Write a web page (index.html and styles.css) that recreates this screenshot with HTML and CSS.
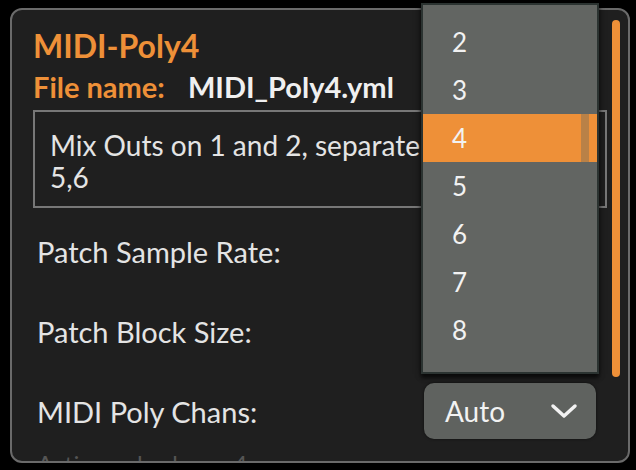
FILE: index.html
```html
<!DOCTYPE html>
<html lang="en">
<head>
    <meta charset="UTF-8">
    <title>MIDI-Poly4</title>
    <link rel="stylesheet" href="styles.css">
</head>
<body>
    <div class="panel">
        <div class="contenido">
            <h1 class="titulo">MIDI-Poly4</h1>
            <div class="archivo">
                <span class="etiqueta">File name:</span>
                <span class="nombre">MIDI_Poly4.yml</span>
            </div>
            <div class="descripcion">
                Mix Outs on 1 and 2, separate voices on 3,4,<br>5,6
            </div>
            <div class="fila">
                <span>Patch Sample Rate:</span>
            </div>
            <div class="fila">
                <span>Patch Block Size:</span>
            </div>
            <div class="fila">
                <span>MIDI Poly Chans:</span>
                <div class="selector">
                    <span>Auto</span>
                    <svg class="flecha" width="28" height="16" viewBox="0 0 28 16">
                        <path d="M3 3 L14 13 L25 3" fill="none" stroke="#f2f2f2" stroke-width="3.5" stroke-linecap="round" stroke-linejoin="round"/>
                    </svg>
                </div>
            </div>
            <div class="nota">Active poly chans: 4</div>
        </div>
        <div class="barra"></div>
    </div>

    <ul class="lista">
        <li>2</li>
        <li>3</li>
        <li class="activo">4</li>
        <li>5</li>
        <li>6</li>
        <li>7</li>
        <li>8</li>
    </ul>
</body>
</html>
```

FILE: styles.css
```css
body {
    margin: 0;
    width: 636px;
    height: 470px;
    background: #000;
    font-family: 'Lato', 'Open Sans', sans-serif;
    color: #e4e4e4;
    overflow: hidden;
    position: relative;
}

.panel {
    margin: 8px 6px 0 10px;
    height: 455px;
    box-sizing: border-box;
    border: 2px solid #6a6a6a;
    border-radius: 12px;
    background: #1f1f1f;
    display: flex;
    overflow: hidden;
}

.contenido {
    flex: 1;
    min-width: 0;
    padding: 0 5px 0 21px;
}

.titulo {
    margin: 0;
    padding-top: 20px;
    height: 32px;
    line-height: 32px;
    font-size: 32px;
    font-weight: 700;
    color: #ee9038;
}

.archivo {
    margin-top: 10px;
    height: 30px;
    line-height: 30px;
    font-size: 29px;
    font-weight: 700;
    white-space: nowrap;
}

.etiqueta {
    color: #ee9038;
    margin-right: 16px;
}

.nombre {
    color: #f0f0f0;
}

.descripcion {
    margin-top: 8px;
    height: 98px;
    box-sizing: border-box;
    border: 2px solid #777;
    padding: 17px 15px 0 15px;
    font-size: 28px;
    line-height: 32px;
    white-space: nowrap;
    overflow: hidden;
}

.fila {
    margin-top: 15px;
    height: 56px;
    display: flex;
    align-items: center;
    justify-content: space-between;
    font-size: 29px;
    padding-left: 4px;
}

.fila + .fila {
    margin-top: 24px;
}

.selector {
    width: 172px;
    height: 56px;
    box-sizing: border-box;
    margin-right: 11px;
    border-radius: 10px;
    background: #5f625f;
    display: flex;
    align-items: center;
    justify-content: space-between;
    padding: 0 18px 0 21px;
    font-size: 28px;
    color: #f2f2f2;
    box-shadow: 0 0 3px rgba(0, 0, 0, 0.6);
}

.nota {
    margin-top: 10px;
    padding-left: 4px;
    font-size: 24px;
    color: #555;
}

.barra {
    flex-shrink: 0;
    width: 8px;
    margin: 10px 8px 84px 0;
    border-radius: 4px;
    background: #ee9038;
}

.lista {
    position: absolute;
    left: 421px;
    top: 3px;
    width: 174px;
    margin: 0;
    padding: 13px 0 18px 0;
    list-style: none;
    background: #626562;
    border: 2px solid #2b3331;
    box-shadow: 0 4px 4px rgba(0, 0, 0, 0.6), 0 0 6px rgba(0, 0, 0, 0.5);
}

.lista li {
    height: 48px;
    line-height: 48px;
    padding-left: 29px;
    font-size: 26px;
    color: #f2f2f2;
    position: relative;
}

.lista li.activo {
    background: #ee9038;
}

.lista li.activo::after {
    content: "";
    position: absolute;
    top: 0;
    bottom: 0;
    right: 8px;
    width: 8px;
    background: rgba(120, 110, 90, 0.45);
}
```
